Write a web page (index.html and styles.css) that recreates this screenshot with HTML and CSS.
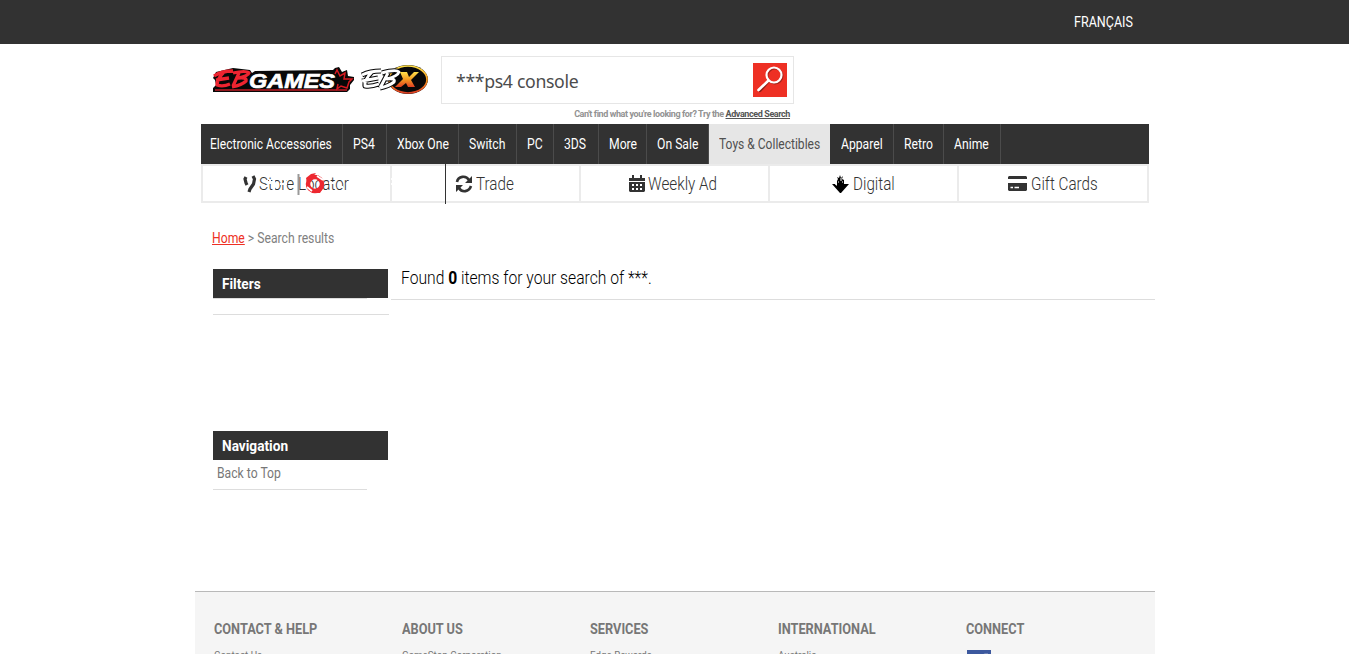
FILE: index.html
```html
<!DOCTYPE html>
<html lang="en">
<head>
<meta charset="utf-8">
<title>Search results - EB Games</title>
<link rel="stylesheet" href="styles.css">
</head>
<body>
<div class="page">
<header class="topbar"><a class="t">FRANÇAIS</a></header>
<div class="masthead">
  <div class="logos">
    <svg class="logo-eb" width="142" height="30" viewBox="0 0 142 30">
      <path d="M0 14 3 8 20 4 37 6 39 9 42 7 120 6 122 4 126 3 129 8 134 6 135 12 141 13 141 16 137 21 137 25 134 28H0V24L3 21 2 16Z" fill="#080808"/>
      <path d="M2 26H134" stroke="#c11c25" stroke-width="1.4"/>
      <path d="M122 10 124 6 127 12 132 9 131 15 139 15 136 18 134 24 128 22 124 25 125 20" fill="none" stroke="#d71920" stroke-width="1.5"/>
      <g fill="none" stroke="#ee2430" stroke-width="3.3" stroke-linejoin="round"><path d="M1 12 Q8 7 20 7M11 8 Q4 15 4 21 Q10 23 17 20M3 16 16 14M26 9 20 22M20 9 Q33 6 36 9 Q35 12 25 14 Q34 13 33 17 Q29 21 19 23"/></g>
      <text class="games" x="36" y="23.500" textLength="86" lengthAdjust="spacingAndGlyphs">GAMES</text>
    </svg>
    <svg class="logo-ebx" width="69" height="32" viewBox="0 0 69 32">
      <defs><linearGradient id="gold" x2="0" y2="1"><stop stop-color="#ffe04a"/><stop offset=".5" stop-color="#f49a20"/><stop offset="1" stop-color="#df3f24"/></linearGradient></defs>
      <ellipse cx="47" cy="15.500" rx="20" ry="14.500" fill="#080808"/>
      <ellipse cx="47" cy="15.500" rx="19" ry="13.500" fill="#080808" stroke="url(#gold)" stroke-width="1.7"/>
      <g fill="none" stroke-linejoin="round"><path d="M1 11 Q9 7 20 7M11 8 Q3 16 4 22 Q10 23 18 20M1 17 17 14M27 9 19 24M21 9 Q35 5 38 8 Q37 12 26 15 Q35 14 33 18 Q28 22 19 24" stroke="#080808" stroke-width="5"/><path d="M1 11 Q9 7 20 7M11 8 Q3 16 4 22 Q10 23 18 20M1 17 17 14M27 9 19 24M21 9 Q35 5 38 8 Q37 12 26 15 Q35 14 33 18 Q28 22 19 24" stroke="#fff" stroke-width="2.900"/></g>
      <path d="M39 8H46L48 13 53 8H58L50 16 54 23H47L45 19 40 23H34L42 15Z" fill="url(#gold)"/>
    </svg>
  </div>
  <div class="searcharea">
    <div class="search"><span class="query">***ps4 console</span>
      <svg width="34" height="34" viewBox="0 0 34 34"><path fill="#ee3024" d="M0 0H34V34H0Z"/><g fill="none" stroke-linecap="round"><path d="M7 28 16 18" stroke="#8e1d15" stroke-width="2.500"/><circle cx="22" cy="13" r="7.500" stroke="#a3241b" stroke-width="2"/><circle cx="21" cy="12" r="7.500" stroke="#fff" stroke-width="2.200"/><path d="M5.500 27 15.500 17.500" stroke="#fff" stroke-width="2.600"/></g></svg>
    </div>
    <p class="hint">Can't find what you're looking for? Try the <a>Advanced Search</a></p>
  </div>
</div>
<nav class="mainnav">
  <a><span class="t">Electronic Accessories</span></a><a><span class="t">PS4</span></a><a><span class="t">Xbox One</span></a><a><span class="t">Switch</span></a><a><span class="t">PC</span></a><a><span class="t">3DS</span></a><a><span class="t">More</span></a><a><span class="t">On Sale</span></a><a class="active"><span class="t">Toys &amp; Collectibles</span></a><a><span class="t">Apparel</span></a><a><span class="t">Retro</span></a><a><span class="t">Anime</span></a>
</nav>
<nav class="services">
  <a class="store"><span class="t">Store Locator</span>
    <svg class="overlay" width="190" height="38" viewBox="0 0 190 38"><path d="M43 12 42 14 43 18 44 20M50 11 51.500 14 50.500 19 47 24 46 27" fill="none" stroke="#333" stroke-width="3.200"/><path d="M60 16H65M61 21H66M67 14V19M71 11V27M77 19H84M82 13V26" fill="none" stroke="#fff" stroke-width="2"/><path d="M95.500 9V30" stroke="#999" stroke-width="2"/><circle cx="112" cy="19" r="7" fill="none" stroke="#ed2830" stroke-width="4.500"/><path d="M103 13 108 9 113 8 104 18ZM113 28 121 22 117 28Z" fill="#ed2830"/><path d="M104 22 109 26M114 11 120 15M126 18H131M135 22H140M145 16V21M189 13V15M189 18V20" stroke="#fff" stroke-width="1.800"/></svg>
  </a>
  <a class="trade"><svg width="18" height="18" viewBox="0 0 18 18"><path d="M2 7C3 1 11 0 14 5M16 11C14 17 7 18 4 13" fill="none" stroke="#333" stroke-width="2.600"/><path d="M17 1V8H10ZM1 17V10H8Z" fill="#333"/></svg><span class="t">Trade</span></a>
  <a class="weekly"><svg width="16" height="18" viewBox="0 0 16 18"><path d="M3 0H5V3H11V0H13V3H16V6H0V3H3ZM0 7H16V16L15 17H1L0 16Z" fill="#333"/><path d="M3 9H5V11H3ZM7 9H9V11H7ZM11 9H13V11H11ZM3 13H5V15H3ZM7 13H9V15H7ZM11 13H13V15H11Z" fill="#fff"/></svg><span class="t">Weekly Ad</span></a>
  <a class="digital"><svg width="17" height="18" viewBox="0 0 17 18"><path d="M5 6 6 4 5 2 7 3 8 0 9 3 11 1 10 4 12 5 12 9 17 9 9 18H8L0 9H3L5 11Z" fill="#000"/><path d="M6 7H7M9 3V6M10 7H11M3 9H4M11 3H12" stroke="#fff"/></svg><span class="t">Digital</span></a>
  <a class="gift"><svg width="19" height="15" viewBox="0 0 19 15"><path d="M1 0H18L19 1V3H0V1ZM0 7H19V14L18 15H1L0 14Z" fill="#333"/><path d="M2.500 11.500H5M6.500 11.500H11" stroke="#fff" stroke-width="1.500"/></svg><span class="t">Gift Cards</span></a>
</nav>
<p class="breadcrumb"><span class="t"><a>Home</a> &gt; Search results</span></p>
<main class="content">
  <aside>
    <h2><span class="t">Filters</span></h2><div class="filterline"></div><div class="filterend"></div>
    <h2 class="navigation"><span class="t">Navigation</span></h2><p class="back"><span class="t">Back to Top</span></p>
  </aside>
  <section class="result"><span class="t">Found <b>0</b> items for your search of ***.</span></section>
</main>
<footer>
  <div><h3><span class="t">CONTACT &amp; HELP</span></h3><a class="t">Contact Us</a></div>
  <div><h3><span class="t">ABOUT US</span></h3><a class="t">GameStop Corporation</a></div>
  <div><h3><span class="t">SERVICES</span></h3><a class="t">Edge Rewards</a></div>
  <div><h3><span class="t">INTERNATIONAL</span></h3><a class="t">Australia</a></div>
  <div><h3><span class="t">CONNECT</span></h3><svg class="facebook" width="24" height="24" viewBox="0 0 24 24"><path fill="#3c589e" d="M0 0H24V24H0Z"/><path d="M21 5H18Q15 5 15 9V24M12 13H21" fill="none" stroke="#fff" stroke-width="2.500"/></svg></div>
</footer>
</div>
</body>
</html>
```
FILE: styles.css
```css
* { box-sizing: border-box; }
html, body { margin: 0; height: 654px; overflow: hidden; background: #fff; }
body { font-family: Roboto, sans-serif; font-size: 14px; color: #333; }
h2, h3, p { margin: 0; }
.page { width: 1349px; height: 654px; overflow: hidden; }
.t { display: inline-block; white-space: nowrap; transform: scaleX(.87); transform-origin: left; }
.topbar { height: 44px; background: #323232; color: #fff; padding: 14px 0 0 1074px; line-height: 17px; }
.topbar .t { transform: scaleX(.895); }
.masthead { display: flex; height: 80px; padding-left: 213px; }
.logos { display: flex; gap: 6px; width: 228px; padding-top: 20px; }
.games { font: italic 900 20px "Liberation Sans", sans-serif; fill: #fff; stroke: #fff; stroke-width: .7; }
.searcharea { width: 353px; padding-top: 12px; }
.search { display: flex; align-items: center; justify-content: space-between; height: 48px; padding: 0 6px 0 14px; border: 1px solid #e6e6e6; }
.query { font: 18.5px "Noto Sans", sans-serif; letter-spacing: -.35px; color: #4c4c4c; transform: scaleX(.955); transform-origin: left; }
.hint { font-size: 9px; font-weight: 700; letter-spacing: -.4px; line-height: 12px; padding-top: 4px; margin-right: 4px; text-align: right; white-space: nowrap; color: #929292; }
.hint a { color: #555; text-decoration: underline; }
.mainnav { display: grid; grid-template-columns: 142px 44px 72px 58px 37px 45px 48px 62px 122px 63px 50px 57px; width: 948px; height: 40px; margin-left: 201px; background: #323232; color: #fff; line-height: 40px; }
.mainnav a { padding-left: 10px; border-right: 1px solid #4b4b4b; min-width: 0; }
.mainnav a:first-child { padding-left: 9px; }
.mainnav a:first-child .t { transform: scaleX(.86); }
.mainnav .active { background: #e6e6e6; color: #505050; border-color: #323232; }
.mainnav .active .t { transform: scaleX(.86); }
.services { display: grid; grid-template-columns: 189px 189px 189px 189px 190px; width: 948px; height: 39px; margin-left: 201px; border: solid #ebebeb; border-width: 2px 0 2px 2px; font-size: 17.5px; font-weight: 350; }
.services > a { display: flex; align-items: center; border-right: 2px solid #ebebeb; position: relative; min-width: 0; }
.services svg { flex: none; }
.services .store { padding-left: 56px; }
.services .overlay { position: absolute; left: 0; top: -1px; }
.services .trade { padding-left: 63px; gap: 3px; }
.trade::before { content: ""; position: absolute; left: 53px; top: -2px; width: 1px; height: 40px; background: #333; }
.weekly { padding-left: 48px; gap: 3px; }
.digital { padding-left: 62px; gap: 4px; }
.gift { padding-left: 49px; gap: 4px; }
.breadcrumb { height: 66px; padding: 27px 0 0 212px; line-height: 17px; color: #808080; }
.breadcrumb a { color: #ee3024; text-decoration: underline; }
.content { display: grid; grid-template-columns: 178px 764px; height: 322px; padding-left: 213px; }
aside h2 { width: 175px; height: 29px; padding-left: 9px; background: #323232; color: #fff; font-size: 15px; line-height: 30px; }
aside h2 .t { transform: scaleX(.91); }
.filterline { width: 154px; height: 1px; background: #ddd; }
.filterend { width: 176px; height: 16px; border-bottom: 1px solid #ddd; }
aside .navigation { margin-top: 116px; }
.back { width: 154px; height: 30px; padding-left: 4px; line-height: 26px; border-bottom: 1px solid #ddd; color: #777; }
.result { height: 31px; padding-left: 10px; border-bottom: 1px solid #ddd; color: #000; font-size: 18px; font-weight: 350; line-height: 18px; }
footer { display: grid; grid-template-columns: repeat(5, 188px); width: 960px; height: 63px; margin-left: 195px; padding: 29px 0 0 19px; border-top: 1px solid #b9b9b9; background: #f5f5f5; color: #777; font-size: 10px; overflow: hidden; }
h3 { height: 29px; font-size: 14px; line-height: 16px; }
h3 .t { transform: scaleX(.91); }
footer div > a { line-height: 12px; }
footer div > .t { transform: scaleX(.98); }
.facebook { display: block; margin-left: 1px; }
```
